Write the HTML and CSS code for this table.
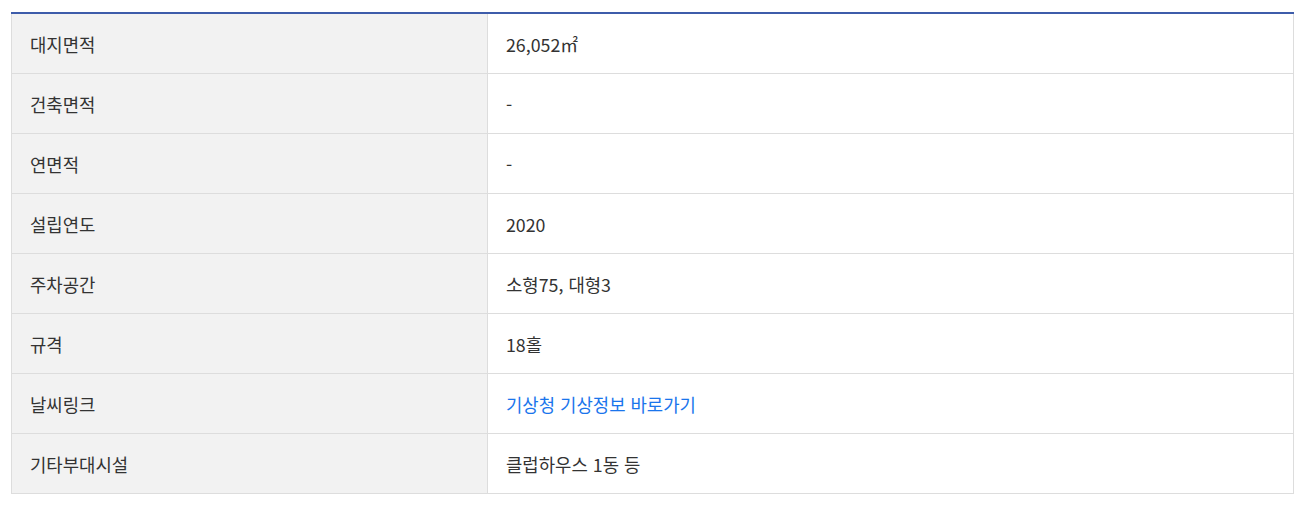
FILE: index.html
```html
<!DOCTYPE html>
<html lang="ko">
<head>
<meta charset="utf-8">
<link rel="stylesheet" href="styles.css">
</head>
<body>
<div class="wrap">
<table class="info">
<colgroup><col class="c-th"><col></colgroup>
<tbody>
<tr><th>대지면적</th><td>26,052㎡</td></tr>
<tr><th>건축면적</th><td>-</td></tr>
<tr><th>연면적</th><td>-</td></tr>
<tr><th>설립연도</th><td>2020</td></tr>
<tr><th>주차공간</th><td>소형75, 대형3</td></tr>
<tr><th>규격</th><td>18홀</td></tr>
<tr><th>날씨링크</th><td><a class="link" href="#">기상청 기상정보 바로가기</a></td></tr>
<tr><th>기타부대시설</th><td>클럽하우스 1동 등</td></tr>
</tbody>
</table>
</div>
</body>
</html>
```
FILE: styles.css
```css
html, body { margin: 0; padding: 0; background: #fff; }
body { font-family: "Noto Sans CJK KR", "Noto Sans", sans-serif; color: #333; }
.wrap { padding: 12px 9px 0 11px; }
.info {
  width: 1283px;
  border-collapse: collapse;
  border-top: 2px solid #3d5caa;
  table-layout: fixed;
}
.c-th { width: 476px; }
.info th, .info td {
  height: 59px;
  padding: 0 0 0 18px;
  border: 1px solid #dddddd;
  border-top: none;
  font-size: 17.8px;
  font-weight: 400;
  text-align: left;
  vertical-align: middle;
  line-height: 24px;
}
.info th { background: #f2f2f2; }
.info td { background: #fff; }
.link { color: #1a75ec; text-decoration: none; }
```
